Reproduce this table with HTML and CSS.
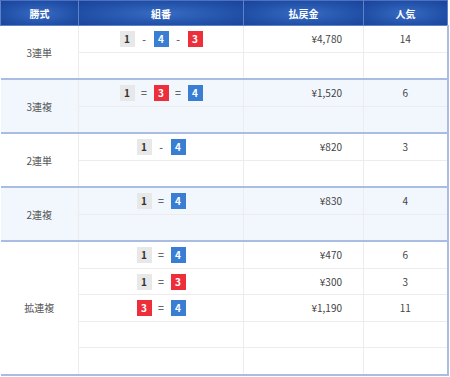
FILE: index.html
```html
<!DOCTYPE html>
<html lang="ja">
<head>
    <meta charset="UTF-8">
    <meta name="viewport" content="width=device-width, initial-scale=1.0">
    <title>払戻金</title>
    <link rel="stylesheet" href="styles.css">
</head>
<body>
    <table class="payout">
        <colgroup>
            <col class="col-kind">
            <col class="col-combo">
            <col class="col-money">
            <col class="col-pop">
        </colgroup>
        <thead>
            <tr>
                <th>勝式</th>
                <th>組番</th>
                <th>払戻金</th>
                <th>人気</th>
            </tr>
        </thead>

        <!-- 3連単 -->
        <tbody class="group">
            <tr>
                <td class="kind" rowspan="2">3連単</td>
                <td class="combo"><span class="no n1">1</span><span class="sep">-</span><span class="no n4">4</span><span class="sep">-</span><span class="no n3">3</span></td>
                <td class="money">¥4,780</td>
                <td class="pop">14</td>
            </tr>
            <tr><td></td><td></td><td></td></tr>
        </tbody>

        <!-- 3連複 -->
        <tbody class="group alt">
            <tr>
                <td class="kind" rowspan="2">3連複</td>
                <td class="combo"><span class="no n1">1</span><span class="sep">=</span><span class="no n3">3</span><span class="sep">=</span><span class="no n4">4</span></td>
                <td class="money">¥1,520</td>
                <td class="pop">6</td>
            </tr>
            <tr><td></td><td></td><td></td></tr>
        </tbody>

        <!-- 2連単 -->
        <tbody class="group">
            <tr>
                <td class="kind" rowspan="2">2連単</td>
                <td class="combo"><span class="no n1">1</span><span class="sep">-</span><span class="no n4">4</span></td>
                <td class="money">¥820</td>
                <td class="pop">3</td>
            </tr>
            <tr><td></td><td></td><td></td></tr>
        </tbody>

        <!-- 2連複 -->
        <tbody class="group alt">
            <tr>
                <td class="kind" rowspan="2">2連複</td>
                <td class="combo"><span class="no n1">1</span><span class="sep">=</span><span class="no n4">4</span></td>
                <td class="money">¥830</td>
                <td class="pop">4</td>
            </tr>
            <tr><td></td><td></td><td></td></tr>
        </tbody>

        <!-- 拡連複 -->
        <tbody class="group">
            <tr>
                <td class="kind" rowspan="5">拡連複</td>
                <td class="combo"><span class="no n1">1</span><span class="sep">=</span><span class="no n4">4</span></td>
                <td class="money">¥470</td>
                <td class="pop">6</td>
            </tr>
            <tr>
                <td class="combo"><span class="no n1">1</span><span class="sep">=</span><span class="no n3">3</span></td>
                <td class="money">¥300</td>
                <td class="pop">3</td>
            </tr>
            <tr>
                <td class="combo"><span class="no n3">3</span><span class="sep">=</span><span class="no n4">4</span></td>
                <td class="money">¥1,190</td>
                <td class="pop">11</td>
            </tr>
            <tr><td></td><td></td><td></td></tr>
            <tr><td></td><td></td><td></td></tr>
        </tbody>
    </table>
</body>
</html>
```

FILE: styles.css
```css
body {
    margin: 0;
    padding: 0;
    background-color: #ffffff;
    font-family: "Noto Sans CJK JP", "Noto Sans", sans-serif;
    color: #444;
}

.payout {
    width: 447px;
    border-collapse: collapse;
    table-layout: fixed;
    font-size: 10px;
}

.col-kind { width: 78px; }
.col-combo { width: 165px; }
.col-money { width: 120px; }
.col-pop { width: 84px; }

.payout th {
    height: 24px;
    padding: 0;
    color: #ffffff;
    font-weight: bold;
    font-size: 10px;
    background: radial-gradient(ellipse at center, #3a6cc4 0%, #2454ac 55%, #1b449a 100%);
    border: 1px solid #5d82c9;
    border-top-color: #4a72c0;
}

.payout td {
    height: 25.5px;
    padding: 0;
    border-left: 1px solid #ececec;
    border-right: 1px solid #ececec;
    border-bottom: 1px solid #ececec;
    text-align: center;
    vertical-align: middle;
}

.payout td:last-child {
    border-right: 2px solid #a9bde3;
}

.group {
    border-bottom: 2px solid #a9bde3;
}

.group tr:last-child td {
    border-bottom: 2px solid #a9bde3;
}

.group .kind {
    border-left: none;
    border-bottom: 2px solid #a9bde3;
    color: #555;
}

.alt td {
    background-color: #f2f7fd;
}

.combo {
    line-height: 16px;
}

.money {
    text-align: right !important;
    padding-right: 21px !important;
}

.no {
    display: inline-block;
    width: 15px;
    height: 16px;
    line-height: 16px;
    vertical-align: middle;
    font-weight: bold;
    font-size: 10px;
    text-align: center;
}

.n1 {
    background-color: #e8e8e8;
    color: #333;
}

.n3 {
    background-color: #ec2f3b;
    color: #ffffff;
}

.n4 {
    background-color: #3a7ed4;
    color: #ffffff;
}

.sep {
    display: inline-block;
    width: 19px;
    text-align: center;
    vertical-align: middle;
    color: #666;
    font-weight: bold;
}
```
